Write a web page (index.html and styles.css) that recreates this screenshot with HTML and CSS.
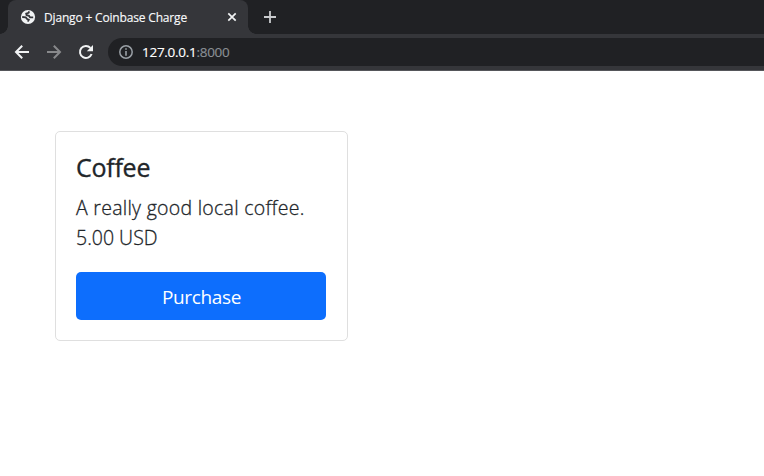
FILE: index.html
```
<!DOCTYPE html>
<html lang="en">
<head>
<meta charset="utf-8">
<title>Django + Coinbase Charge</title>
<link rel="stylesheet" href="styles.css">
</head>
<body>
<header class="browser">
  <div class="tabstrip">
    <div class="tab">
      <svg class="favicon" width="16" height="16" viewBox="0 0 16 16"><circle cx="8" cy="8" r="7.1" fill="#f1f3f4"/><path d="M9.2 2.4 8.6 3.9 6.2 4.7 6.5 6 9 6.8 10 8.4 13.2 8.3M2.2 8 5.8 8.3 6.8 9.8 8.8 10.8 7.6 12.6" fill="none" stroke="#35363a" stroke-width="1.8"/></svg>
      <span class="tab-title">Django + Coinbase Charge</span>
      <svg class="close" width="10" height="10" viewBox="0 0 10 10"><path d="M1.3 1.3 8.7 8.7M8.7 1.3 1.3 8.7" stroke="#f1f3f4" stroke-width="1.7"/></svg>
    </div>
    <svg class="new-tab" width="12" height="12" viewBox="0 0 12 12"><path d="M6 0V12M0 6H12" stroke="#c9cbce" stroke-width="1.8"/></svg>
  </div>
  <div class="toolbar">
    <svg class="nav" width="16" height="16" viewBox="0 0 16 16"><path d="M15 8H2.2M8.2 1.8 2 8 8.2 14.2" fill="none" stroke="#f1f3f4" stroke-width="2"/></svg>
    <svg class="nav" width="16" height="16" viewBox="0 0 16 16"><path d="M1 8H13.8M7.8 1.8 14 8 7.8 14.2" fill="none" stroke="#88898b" stroke-width="2"/></svg>
    <svg class="nav" width="16" height="16" viewBox="0 0 16 16"><path d="M13.6 10A6 6 0 1 1 12.4 3.9" fill="none" stroke="#f1f3f4" stroke-width="2"/><path d="M15 1V7.2H8.8Z" fill="#f1f3f4"/></svg>
    <div class="address">
      <svg width="14" height="14" viewBox="0 0 14 14"><circle cx="7" cy="7" r="6.2" fill="none" stroke="#9aa0a6" stroke-width="1.5"/><path d="M7 3.2V4.8M7 6V10.7" stroke="#9aa0a6" stroke-width="1.6"/></svg>
      <span class="url">127.0.0.1<span class="port">:8000</span></span>
    </div>
  </div>
</header>
<main class="page">
  <article class="card">
    <h5 class="card-title">Coffee</h5>
    <p class="card-text"><span class="description">A really good local coffee.</span><br><span class="price">5.00 USD</span></p>
    <button class="btn">Purchase</button>
  </article>
</main>
</body>
</html>
```
FILE: styles.css
```
* { box-sizing: border-box; }
body { margin: 0; background: #fff; color: #212529; font-family: "Open Sans", "Noto Sans", sans-serif; font-variant-ligatures: none; overflow: hidden; }
svg { display: block; flex: none; }
.browser { height: 71px; background: #35363a; border-bottom: 1px solid #55565a; }
.tabstrip { height: 34px; padding-left: 8px; background: #202124; display: flex; align-items: center; }
.tab { width: 240px; height: 34px; padding: 0 11px 0 12px; background: #35363a; border-radius: 8px 8px 0 0; display: flex; align-items: center; position: relative; }
.tab::before, .tab::after { content: ""; position: absolute; bottom: 0; width: 8px; height: 8px; }
.tab::before { left: -8px; background: radial-gradient(circle at 0 0, #202124 7.5px, #35363a 8px); }
.tab::after { right: -8px; background: radial-gradient(circle at 100% 0, #202124 7.5px, #35363a 8px); }
.tab-title { margin-left: 8px; color: #f8f9fa; font-size: 12px; letter-spacing: -.17px; white-space: nowrap; -webkit-text-stroke: .15px; }
.close { margin-left: auto; }
.new-tab { margin-left: 16px; }
.toolbar { height: 36px; padding-left: 14px; display: flex; align-items: center; gap: 16px; }
.address { flex: 1; height: 28px; margin-left: -2px; padding-left: 11px; border-radius: 14px 0 0 14px; background: #202124; display: flex; align-items: center; }
.url { margin-left: 9px; color: #fff; font-size: 13.5px; letter-spacing: -.28px; -webkit-text-stroke: .15px; }
.port { color: #8b9095; }
.page { padding: 60px 55px; }
.card { width: 293px; height: 210px; padding: 20px 21px 20px 20px; border: 1px solid #dfdfdf; border-radius: 5px; }
.card-title { margin: 0 0 10px; font-size: 25px; line-height: 31px; font-weight: 400; letter-spacing: -.25px; -webkit-text-stroke: .35px; }
.card-text { margin: 0 0 19px; font-size: 19.5px; line-height: 30px; font-weight: 300; white-space: nowrap; -webkit-text-stroke: .3px; }
.description { letter-spacing: .27px; }
.btn { display: block; width: 250px; height: 48px; padding: 2px 0 0 1px; border: 0; border-radius: 5px; background: #0d6efd; color: #fff; font: 400 19px/46px "Open Sans", "Noto Sans", sans-serif; letter-spacing: -.35px; }
```
